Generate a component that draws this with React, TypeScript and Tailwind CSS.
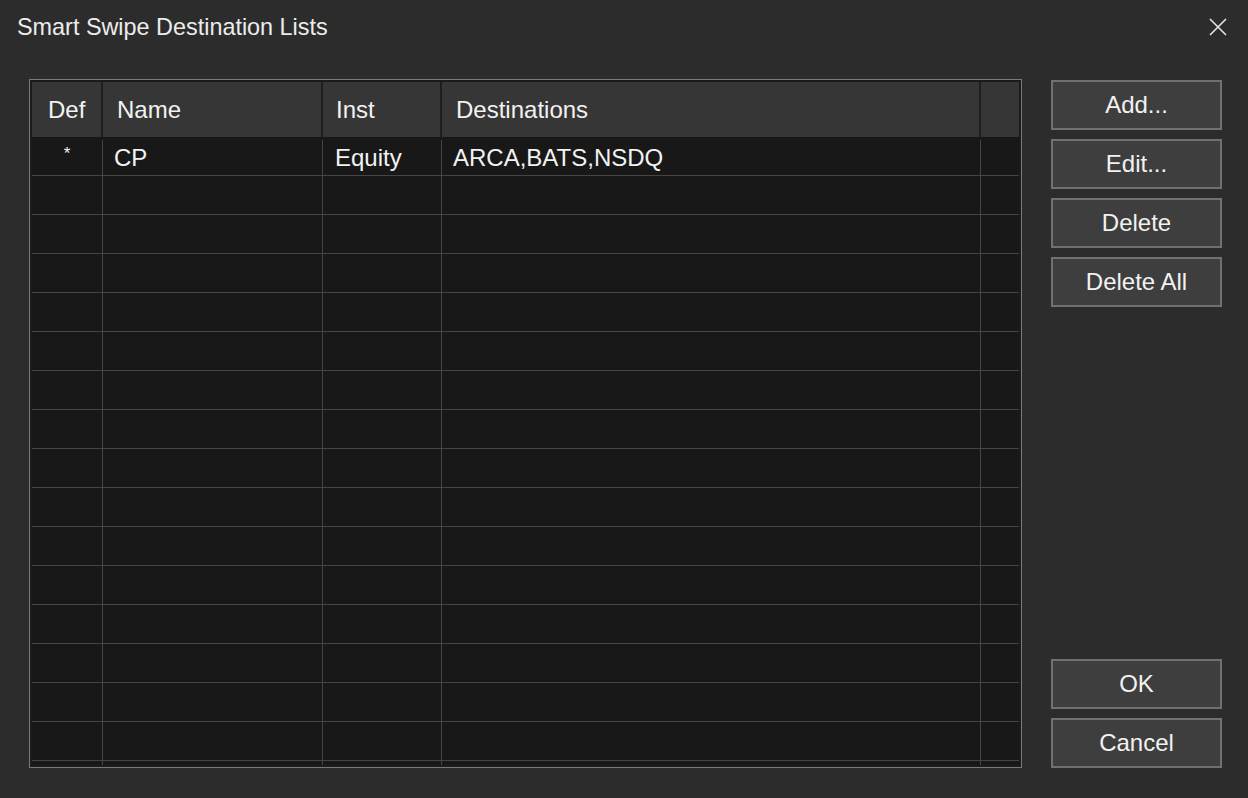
/* ── Smart Swipe destination lists dialog ── */

import React from 'react';

const font = { fontFamily: '"Liberation Sans", Arial, sans-serif' };

const columns = [
  { key: 'def', label: 'Def', width: 'w-[71px]', pad: 'pl-[16px]' },
  { key: 'name', label: 'Name', width: 'w-[220px]', pad: 'pl-[14px]' },
  { key: 'inst', label: 'Inst', width: 'w-[119px]', pad: 'pl-[13px]' },
  { key: 'dest', label: 'Destinations', width: 'w-[539px]', pad: 'pl-[14px]' },
];

const rows = [{ def: '*', name: 'CP', inst: 'Equity', dest: 'ARCA,BATS,NSDQ' }];

function DialogButton({ label }: { label: string }) {
  return (
    <button className="h-[50px] w-[171px] border-2 border-[#717171] bg-[#3e3e3e] text-[24px] leading-none text-[#f2f2f2]">
      {label}
    </button>
  );
}

export default function App() {
  const emptyRows = Array.from({ length: 16 });

  return (
    <div className="h-[798px] w-[1248px] overflow-hidden bg-[#2c2c2c] text-[#f2f2f2]" style={font}>
      {/* title bar */}
      <div className="flex h-[56px] items-center justify-between pl-[17px] pr-[20px]">
        <span className="text-[23.4px] text-[#ececec]">Smart Swipe Destination Lists</span>
        <svg width="20" height="20" viewBox="0 0 20 20" className="mb-[2px]">
          <path d="M2 2 L18 18 M18 2 L2 18" stroke="#e6e6e6" strokeWidth="1.6" />
        </svg>
      </div>

      <div className="flex gap-[29px] pl-[29px] pt-[23px]">
        {/* grid */}
        <div className="h-[689px] w-[993px] border border-[#7a7a7a]">
          <div className="h-full w-full overflow-hidden border-2 border-[#1b1b1b] bg-[#181818]">
            <div className="flex h-[55px] bg-[#363636]">
              {columns.map((c) => (
                <div
                  key={c.key}
                  className={`flex h-full shrink-0 items-center border-r-2 border-[#1e1e1e] text-[24px] ${c.width} ${c.pad}`}
                >
                  {c.label}
                </div>
              ))}
              <div className="h-full flex-1" />
            </div>

            {rows.map((r, i) => (
              <div key={i} className="flex h-[39px] border-b border-[#454545] pt-[3px] text-[24px]">
                <div className="flex w-[71px] shrink-0 items-center justify-center border-r border-[#454545] pb-[8px] text-[17px]">
                  {r.def}
                </div>
                <div className="flex w-[220px] shrink-0 items-center border-r border-[#454545] pl-[11px]">{r.name}</div>
                <div className="flex w-[119px] shrink-0 items-center border-r border-[#454545] pl-[12px]">{r.inst}</div>
                <div className="flex w-[539px] shrink-0 items-center border-r border-[#454545] pl-[11px]">{r.dest}</div>
                <div className="flex-1" />
              </div>
            ))}

            {emptyRows.map((_, i) => (
              <div key={i} className="flex h-[39px] border-b border-[#454545]">
                <div className="w-[71px] shrink-0 border-r border-[#454545]" />
                <div className="w-[220px] shrink-0 border-r border-[#454545]" />
                <div className="w-[119px] shrink-0 border-r border-[#454545]" />
                <div className="w-[539px] shrink-0 border-r border-[#454545]" />
                <div className="flex-1" />
              </div>
            ))}
          </div>
        </div>

        {/* buttons */}
        <div className="flex h-[689px] flex-col justify-between pt-[1px]">
          <div className="flex flex-col gap-[9px]">
            <DialogButton label="Add..." />
            <DialogButton label="Edit..." />
            <DialogButton label="Delete" />
            <DialogButton label="Delete All" />
          </div>
          <div className="flex flex-col gap-[9px]">
            <DialogButton label="OK" />
            <DialogButton label="Cancel" />
          </div>
        </div>
      </div>
    </div>
  );
}
